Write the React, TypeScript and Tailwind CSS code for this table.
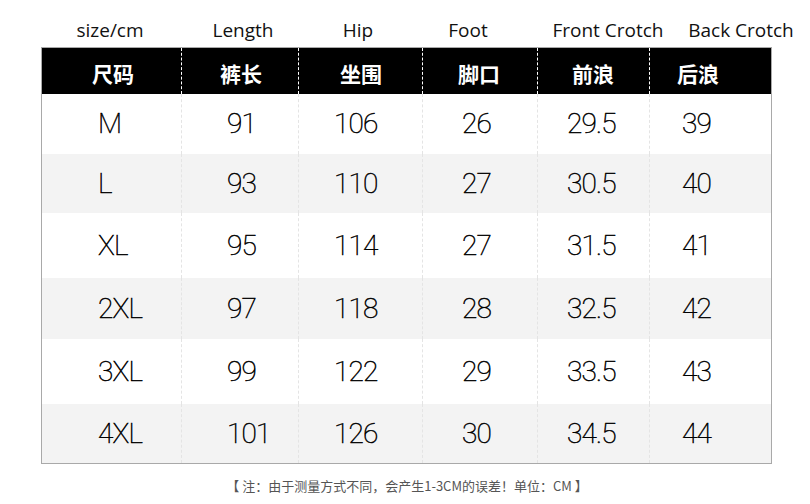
import React from "react";

const labels: { t: string; w: string }[] = [
  { t: "size/cm", w: "w-[138px]" },
  { t: "Length", w: "w-[128px]" },
  { t: "Hip", w: "w-[102px]" },
  { t: "Foot", w: "w-[118px]" },
  { t: "Front Crotch", w: "w-[162px]" },
  { t: "Back Crotch", w: "w-[104px]" },
];

const heads = ["尺码", "裤长", "坐围", "脚口", "前浪", "后浪"];

const colW = ["w-[139px]", "w-[117px]", "w-[124px]", "w-[115px]", "w-[112px]", "w-[122px]"];
const headPad = ["pl-[50px]", "pl-[38px]", "pl-[41px]", "pl-[35px]", "pl-[34px]", "pl-[27px]"];
const dataPad = ["pl-[56px]", "pl-[45px]", "pl-[35px]", "pl-[39px]", "pl-[29px]", "pl-[32px]"];

const rows: { h: string; bg: string; v: string[] }[] = [
  { h: "h-[60px]", bg: "bg-white", v: ["M", "91", "106", "26", "29.5", "39"] },
  { h: "h-[59px]", bg: "bg-[#f3f3f3]", v: ["L", "93", "110", "27", "30.5", "40"] },
  { h: "h-[65px]", bg: "bg-white", v: ["XL", "95", "114", "27", "31.5", "41"] },
  { h: "h-[61px]", bg: "bg-[#f3f3f3]", v: ["2XL", "97", "118", "28", "32.5", "42"] },
  { h: "h-[65px]", bg: "bg-white", v: ["3XL", "99", "122", "29", "33.5", "43"] },
  { h: "h-[59px]", bg: "bg-[#f3f3f3]", v: ["4XL", "101", "126", "30", "34.5", "44"] },
];

export default function App() {
  return (
    <div className="w-[810px] h-[504px] bg-white overflow-hidden flex flex-col">
      {/* English labels */}
      <div className="h-[47px] pl-[41px] pt-[18px] flex items-start">
        {labels.map((l) => (
          <div
            key={l.t}
            className={`${l.w} flex justify-center whitespace-nowrap text-[19px] leading-[24px] text-[#111] font-['Open_Sans',sans-serif]`}
          >
            {l.t}
          </div>
        ))}
      </div>

      {/* Table */}
      <div className="ml-[41px] w-[731px] border border-[#a9a9a9] flex flex-col">
        <div className="h-[46px] bg-black flex">
          {heads.map((h, i) => (
            <div
              key={h}
              className={`${colW[i]} ${headPad[i]} h-full flex items-center pt-[5px] text-white font-bold text-[21px] leading-none font-['Noto_Sans_CJK_SC',sans-serif] ${
                i > 0 ? "border-l border-dashed border-white" : ""
              }`}
            >
              {h}
            </div>
          ))}
        </div>
        {rows.map((r, ri) => (
          <div key={ri} className={`${r.h} ${r.bg} flex`}>
            {r.v.map((v, i) => (
              <div
                key={i}
                className={`${colW[i]} ${dataPad[i]} h-full flex items-center text-[28px] leading-none font-thin text-black font-['Roboto',sans-serif] tracking-[-0.8px] [-webkit-text-stroke:0.5px_#000] ${
                  i > 0 ? "border-l border-dashed border-[#e4e4e4]" : ""
                }`}
              >
                {v}
              </div>
            ))}
          </div>
        ))}
      </div>

      {/* Note */}
      <div className="mt-[14px] flex justify-center pl-[4px] text-[13px] leading-[16px] text-[#555] font-['Noto_Sans_CJK_SC',sans-serif] whitespace-nowrap">
        【 注：由于测量方式不同，会产生1-3CM的误差！单位：CM 】
      </div>
    </div>
  );
}
